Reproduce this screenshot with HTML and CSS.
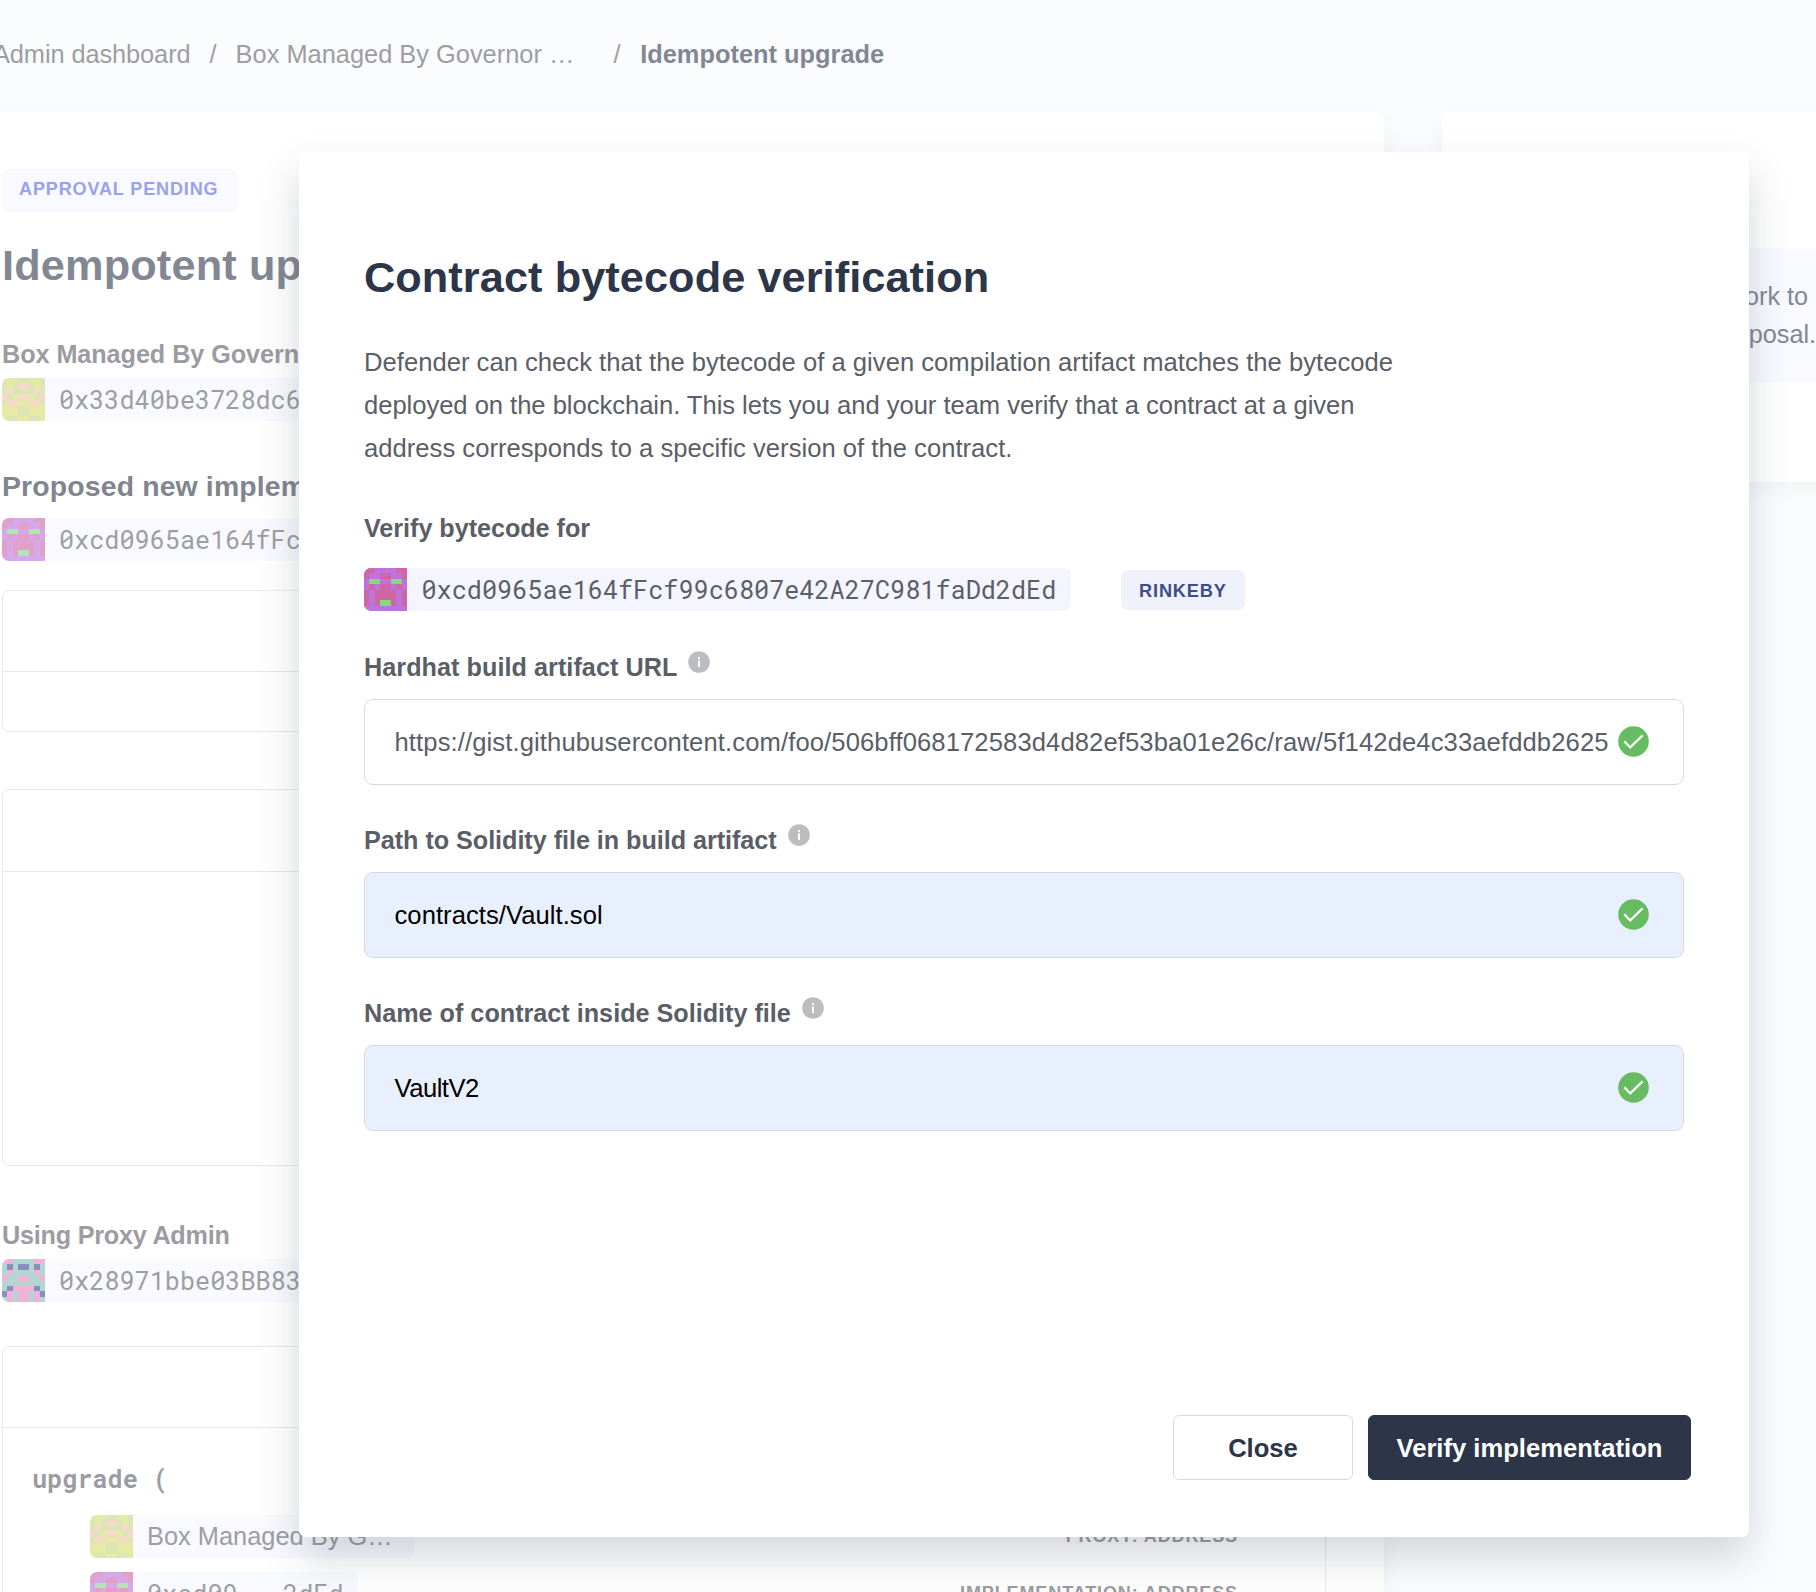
FILE: index.html
```html
<!DOCTYPE html>
<html lang="en">
<head>
<meta charset="utf-8">
<title>Idempotent upgrade</title>
<link rel="stylesheet" href="styles.css">
</head>
<body>
<svg class="defs" aria-hidden="true">
  <symbol id="id-pink" viewBox="0 0 8 8" shape-rendering="crispEdges">
    <path fill="#bd72dc" d="M0 0h8v8H0z"/>
    <path fill="#ce66a6" d="M0 0h2v1H0zM6 0h2v1H6zM0 1h1v1H0zM7 1h1v1H7zM3 1h2v1H3zM1 3h1v1H1zM6 3h1v1H6zM3 3h2v1H3zM2 4h4v3H2zM0 4h1v3H0zM7 4h1v3H7z"/>
    <path fill="#88d67f" d="M1 2h2v1H1zM5 2h2v1H5zM3 6h2v1H3z"/>
  </symbol>
  <symbol id="id-yellow" viewBox="0 0 8 8" shape-rendering="crispEdges">
    <path fill="#dade6b" d="M0 0h8v8H0z"/>
    <path fill="#cad584" d="M0 0h1v3H0zM7 0h1v3H7zM3 0h2v1H3zM2 1h1v2H2zM5 1h1v2H5zM3 2h2v1H3zM1 3h1v1H1zM6 3h1v1H6zM0 4h1v1H0zM7 4h1v1H7zM3 5h2v2H3zM1 7h2v1H1zM5 7h2v1H5z"/>
    <path fill="#f3c3a3" d="M3 1h2v1H3zM1 2h1v1H1zM6 2h1v1H6zM0 3h1v1H0zM7 3h1v1H7zM3 3h2v1H3zM1 4h2v1H1zM5 4h2v1H5z"/>
  </symbol>
  <symbol id="id-teal" viewBox="0 0 8 8" shape-rendering="crispEdges">
    <path fill="#82c0b2" d="M0 0h8v8H0z"/>
    <path fill="#eb82c1" d="M0 0h2v1H0zM6 0h2v1H6zM1 2h1v1H1zM6 2h1v1H6zM0 3h1v1H0zM7 3h1v1H7zM3 3h2v1H3zM2 5h4v1H2zM1 6h1v2H1zM6 6h1v2H6zM3 6h2v2H3z"/>
    <path fill="#3f4698" d="M1 1h1v1H1zM6 1h1v1H6zM3 1h2v1H3zM1 5h1v1H1zM6 5h1v1H6zM0 6h1v1H0zM7 6h1v1H7z"/>
  </symbol>
  <symbol id="info" viewBox="0 0 22 22">
    <circle cx="11" cy="11" r="10.8" fill="#bcbdc1"/>
    <path fill="#fff" d="M10 6h2v2h-2zM10 9.5h2v6.5h-2z"/>
  </symbol>
  <symbol id="check" viewBox="0 0 31 31">
    <circle cx="15.5" cy="15.5" r="15.3" fill="#67bc62"/>
    <path fill="none" stroke="#fff" stroke-width="2.2" d="M6.3 15.2l5.9 6.2L24.6 9.4"/>
  </symbol>
</svg>

<div class="app">
  <nav class="crumbs">
    <span class="crumb-home">Admin dashboard</span><span class="sep-a">/</span><span class="crumb-contract">Box Managed By Governor …</span><span class="sep-b">/</span><b class="crumb-current">Idempotent upgrade</b>
  </nav>
  <div class="columns">
    <main class="card proposal">
      <div class="status">APPROVAL PENDING</div>
      <h1>Idempotent upgrade</h1>
      <h3>Box Managed By Governor</h3>
      <div class="chip"><svg><use href="#id-yellow"/></svg><code>0x33d40be3728dc6</code></div>
      <h2>Proposed new implementation</h2>
      <div class="chip"><svg><use href="#id-pink"/></svg><code>0xcd0965ae164fFcf</code></div>
      <section class="panel panel-a"><header></header></section>
      <section class="panel panel-b"><header></header></section>
      <h3 class="using">Using Proxy Admin</h3>
      <div class="chip"><svg><use href="#id-teal"/></svg><code>0x28971bbe03BB83</code></div>
      <section class="panel panel-c">
        <header></header>
        <div class="call">
          <code class="fn">upgrade (</code>
          <div class="param"><div class="chip one"><svg><use href="#id-yellow"/></svg><span>Box Managed By G…</span></div><em>PROXY: ADDRESS</em></div>
          <div class="param"><div class="chip two"><svg><use href="#id-pink"/></svg><code>0xcd09...2dEd</code></div><em>IMPLEMENTATION: ADDRESS</em></div>
        </div>
      </section>
    </main>
    <aside class="card side">
      <p class="note"><span class="note-first">network to</span><br>proposal.</p>
    </aside>
  </div>
</div>

<div class="modal" role="dialog">
  <h1 class="title">Contract bytecode verification</h1>
  <p class="lead">Defender can check that the bytecode of a given compilation artifact matches the bytecode<br><span class="tight">deployed on the blockchain. This lets you and your team verify that a contract at a given</span><br>address corresponds to a specific version of the contract.</p>
  <h3 class="for">Verify bytecode for</h3>
  <div class="target">
    <div class="chip"><svg><use href="#id-pink"/></svg><code>0xcd0965ae164fFcf99c6807e42A27C981faDd2dEd</code></div>
    <span class="network">RINKEBY</span>
  </div>
  <div class="field">
    <label><span class="loose">Hardhat build artifact URL</span><svg><use href="#info"/></svg></label>
    <div class="input url"><span>https://gist.githubusercontent.com/foo/506bff068172583d4d82ef53ba01e26c/raw/5f142de4c33aefddb2625</span><svg><use href="#check"/></svg></div>
  </div>
  <div class="field">
    <label><span class="tight">Path to Solidity file in build artifact</span><svg><use href="#info"/></svg></label>
    <div class="input filled"><span class="loose">contracts/Vault.sol</span><svg><use href="#check"/></svg></div>
  </div>
  <div class="field">
    <label><span>Name of contract inside Solidity file</span><svg><use href="#info"/></svg></label>
    <div class="input filled"><span class="name">VaultV2</span><svg><use href="#check"/></svg></div>
  </div>
  <div class="actions">
    <button class="close">Close</button>
    <button class="verify">Verify implementation</button>
  </div>
</div>
</body>
</html>
```
FILE: styles.css
```css
* { box-sizing: border-box; }

body {
  margin: 0;
  width: 1816px;
  height: 1592px;
  overflow: hidden;
  position: relative;
  background: #fbfcfe;
  font-family: "Liberation Sans", Arial, sans-serif;
  font-size: 25.6px;
}

h1, h2, h3, p { margin: 0; white-space: nowrap; }
code { font-family: "Roboto Mono", "DejaVu Sans Mono", monospace; font-size: 25.2px; }
.defs { position: absolute; width: 0; height: 0; }

/* Page behind the dialog */
.app { height: 1592px; overflow: hidden; }

.crumbs {
  display: flex;
  height: 112px;
  padding-top: 34px;
  font-size: 25.4px;
  line-height: 40px;
  white-space: nowrap;
  color: #9d9ea3;
}
.crumb-home { margin-left: -7px; letter-spacing: -.1px; }
.sep-a { margin: 0 19px; }
.crumb-contract { width: 378px; }
.sep-b { margin-right: 19.5px; }
.crumb-current { color: #828893; }

.columns { display: flex; align-items: flex-start; gap: 58px; }
.card { background: #fff; border-radius: 6px; box-shadow: 0 5px 18px rgba(40, 50, 60, .05); }
.proposal { flex: none; width: 1442px; height: 1600px; margin-left: -58px; padding: 57px 58px 0 60px; }
.side { flex: none; width: 460px; height: 370px; padding-top: 136px; }
.note {
  width: 374px;
  height: 134px;
  padding-top: 29px;
  font-size: 25.2px;
  line-height: 38px;
  text-align: right;
  background: #f9faff;
  color: #828893;
}
.note-first { margin-right: 8px; }

.status {
  width: 235px;
  height: 43px;
  padding-left: 17px;
  border-radius: 6px;
  background: #f9faff;
  color: #98a1ee;
  font-size: 18px;
  font-weight: 700;
  letter-spacing: .88px;
  line-height: 40px;
  white-space: nowrap;
}
.proposal h1 { margin: 28px 0 49px; font-size: 43.3px; letter-spacing: .15px; line-height: 50px; color: #828893; }
.proposal h2 { margin: 48px 0 15px; font-size: 28.4px; letter-spacing: .15px; line-height: 34px; color: #80858f; }
.proposal h3 { margin: 49px 0 9px; font-size: 25.2px; letter-spacing: -.05px; line-height: 30px; color: #9b9ca2; }
.proposal .using { margin-top: 54px; letter-spacing: -.22px; }

.chip {
  display: flex;
  align-items: center;
  gap: 14.5px;
  width: 707px;
  height: 43px;
  border-radius: 7px;
  overflow: hidden;
  background: #f5f5fe;
  color: #5a5e67;
  line-height: 43px;
  white-space: nowrap;
}
.chip svg { flex: none; width: 43px; height: 43px; }
.proposal .chip { gap: 14px; background: #f9faff; color: #9c9ea2; }
.proposal .chip svg { opacity: .6; }

.panel { border: 1px solid #e7e8eb; border-radius: 7px; }
.panel header { border-bottom: 1px solid #e7e8eb; }
.panel-a { height: 142px; margin-top: 29px; }
.panel-a header { height: 81px; }
.panel-b { height: 377px; margin-top: 57px; }
.panel-b header { height: 82px; }
.panel-c { height: 400px; margin-top: 44px; }
.panel-c header { height: 81px; }
.call { padding: 33px 87px 0 29px; }
.fn { display: block; margin-bottom: 18px; font-weight: 700; line-height: 36px; color: #9b9ca2; }
.param { display: flex; align-items: center; justify-content: space-between; margin: 0 0 14px 58px; }
.param em { font-size: 18px; font-style: normal; font-weight: 700; letter-spacing: .88px; color: #9b9ca2; }
.chip.one { width: 324px; font-size: 25.4px; line-height: 45px; }
.chip.two { width: 268px; }

/* Dialog */
.modal {
  position: absolute;
  left: 299px;
  top: 152px;
  width: 1450px;
  height: 1385px;
  display: flex;
  flex-direction: column;
  padding: 100px 65px 57px;
  border-radius: 7px;
  background: #fff;
  box-shadow: 0 20px 42px rgba(46, 54, 74, .2);
  color: #5a5e67;
}
.title { font-size: 43.3px; letter-spacing: .07px; line-height: 50px; color: #2d3548; }
.lead { margin-top: 39px; letter-spacing: .02px; line-height: 43px; }
.for { margin: 43px 0 25px; font-size: 25.2px; letter-spacing: -.04px; line-height: 30px; }
.target { display: flex; align-items: center; gap: 50px; }
.network {
  width: 124px;
  height: 40px;
  padding-left: 18px;
  border-radius: 7px;
  background: #eff2fb;
  color: #3f4d8f;
  font-size: 18.2px;
  font-weight: 700;
  letter-spacing: .85px;
  line-height: 42px;
}
.field { margin-top: 41px; }
.field + .field { margin-top: 40px; }
.field label { display: flex; gap: 11px; font-size: 25.2px; font-weight: 700; line-height: 30px; white-space: nowrap; }
.field label svg { width: 22px; height: 22px; margin-top: -1px; }
.tight { letter-spacing: -.04px; }
.loose { letter-spacing: .05px; }
.input {
  display: flex;
  align-items: center;
  justify-content: space-between;
  height: 86px;
  margin-top: 17px;
  padding: 0 34px 0 29.5px;
  border: 1px solid #d8d9de;
  border-radius: 9px;
  white-space: nowrap;
}
.url { letter-spacing: .11px; }
.name { letter-spacing: -.5px; }
.input svg { flex: none; width: 31px; height: 31px; margin-bottom: 1px; }
.filled { background: #e8effd; color: #000; }

.actions { display: flex; justify-content: flex-end; gap: 15px; margin: auto -7px 0 0; }
.actions button {
  height: 65px;
  padding: 1px 0 0;
  border: 1px solid #2d3548;
  border-radius: 6px;
  font: 700 25.6px/62px "Liberation Sans", Arial, sans-serif;
  white-space: nowrap;
}
.close { width: 180px; background: #fff; color: #2d3548; }
.actions .close { border-color: #d8d9de; }
.verify { width: 323px; background: #2d3548; color: #fff; }
```
